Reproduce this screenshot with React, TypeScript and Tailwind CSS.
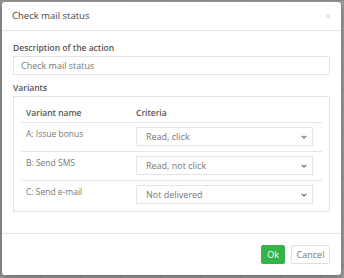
import React from "react";

const rows = [
  { name: "A: Issue bonus", value: "Read, click" },
  { name: "B: Send SMS", value: "Read, not click" },
  { name: "C: Send e-mail", value: "Not delivered" },
];

const Chevron = () => (
  <svg width="6" height="4" viewBox="0 0 6 4" className="text-[#666]">
    <path d="M0.8 0.8l2.2 2.2 2.2-2.2" fill="none" stroke="currentColor" strokeWidth="1.2" />
  </svg>
);

export default function App() {
  return (
    <div
      className="w-[344px] h-[278px] p-[2px] pb-[3px] pr-[3px] bg-[#9d9d9d] bg-[linear-gradient(90deg,#8f8f8f_1px,transparent_1px),linear-gradient(#8f8f8f_1px,transparent_1px)] bg-[size:40px_100%,100%_22px] font-['Open_Sans',sans-serif] text-[#555]"
    >
      <div className="flex flex-col h-full bg-white rounded-[3px] shadow-[0_2px_6px_rgba(0,0,0,0.35)]">
        {/* Header */}
        <div className="flex items-center justify-between h-[29px] pl-[10px] pr-[10px] border-b border-[#e5e5e5]">
          <h4 className="text-[9.5px] text-[#444]">Check mail status</h4>
          <span className="text-[10px] text-[#d0d0d0] leading-none">×</span>
        </div>

        {/* Body */}
        <div className="flex-1 px-[11px] pt-[11px]">
          <label className="block text-[8.5px] font-semibold text-[#555] leading-[12px] mb-[2px]">Description of the action</label>
          <div className="h-[19px] flex items-center px-[7px] border border-[#e3e3e3] text-[9px] text-[#777]">
            Check mail status
          </div>

          <div className="text-[8.5px] font-semibold text-[#555] leading-[12px] mt-[7px] mb-[2px]">Variants</div>
          <div className="border border-[#e3e3e3] px-[7px] pt-[7px] pb-[1px]">
            <div className="flex items-center h-[19px] border-b border-[#e5e5e5] text-[8.5px] font-semibold text-[#555]">
              <div className="w-[115px] pl-[5px]">Variant name</div>
              <div>Criteria</div>
            </div>
            {rows.map((r, i) => (
              <div key={r.name} className={`flex h-[29px] pt-[4px] ${i < rows.length - 1 ? "border-b border-[#e5e5e5]" : ""}`}>
                <div className="w-[115px] pl-[5px] pt-[1px] text-[8.5px] text-[#777]">{r.name}</div>
                <div className="w-[177px] h-[19px] flex items-center justify-between pl-[9px] pr-[5px] border border-[#e3e3e3] text-[9px] text-[#777]">
                  <span>{r.value}</span>
                  <Chevron />
                </div>
              </div>
            ))}
          </div>
        </div>

        {/* Footer */}
        <div className="flex justify-end items-center gap-[6px] h-[42px] px-[11px] border-t border-[#e5e5e5]">
          <button className="h-[19px] w-[24px] bg-[#34b349] rounded-[2px] text-white text-[9px]">Ok</button>
          <button className="h-[19px] w-[39px] bg-white border border-[#e0e0e0] rounded-[2px] text-[#777] text-[9px]">Cancel</button>
        </div>
      </div>
    </div>
  );
}
